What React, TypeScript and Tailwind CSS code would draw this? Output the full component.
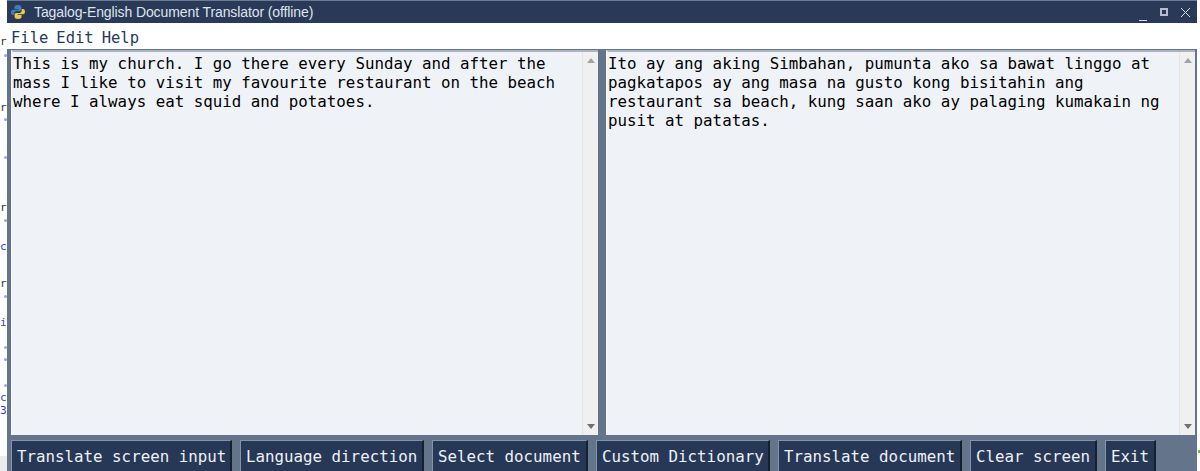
import React from "react";

const buttons = [
  { label: "Translate screen input", width: "w-[221px]" },
  { label: "Language direction", width: "w-[184px]" },
  { label: "Select document", width: "w-[156px]" },
  { label: "Custom Dictionary", width: "w-[174px]" },
  { label: "Translate document", width: "w-[184px]" },
  { label: "Clear screen", width: "w-[127px]" },
  { label: "Exit", width: "w-[51px]" },
];

const leftText =
  "This is my church. I go there every Sunday and after the\nmass I like to visit my favourite restaurant on the beach\nwhere I always eat squid and potatoes.";
const rightText =
  "Ito ay ang aking Simbahan, pumunta ako sa bawat linggo at\npagkatapos ay ang masa na gusto kong bisitahin ang\nrestaurant sa beach, kung saan ako ay palaging kumakain ng\npusit at patatas.";

// bits of the window behind, peeking out on the left
const behind = [
  { y: 36, ch: "r", cls: "text-[#333]" },
  { y: 102, ch: "r", cls: "text-[#333]" },
  { y: 202, ch: "r", cls: "text-[#333]" },
  { y: 278, ch: "r", cls: "text-[#333]" },
  { y: 241, ch: "c", cls: "text-[#3344dd]" },
  { y: 317, ch: "i", cls: "text-[#3344dd]" },
  { y: 392, ch: "c", cls: "text-[#3344dd]" },
  { y: 405, ch: "3", cls: "text-[#3344dd]" },
  { y: 457, ch: ":", cls: "text-[#333]" },
];
const dots = [54, 118, 156, 219, 295, 346, 358, 384];

const PythonIcon = () => (
  <svg width="16" height="16" viewBox="0 0 16 16">
    <path d="M8 1C5 1 4.500 2 4.500 3.200V5h3.800v.7H3C1.600 5.700 1 6.800 1 8.200s.7 2.800 2 2.800h1.300V9.300c0-1.200 1-2.300 2.300-2.300h3c1 0 1.800-.8 1.800-1.800V3C11.400 1.800 10 1 8 1z" fill="#3f7fb8" />
    <path d="M8 15c3 0 3.500-1 3.500-2.200V11H7.700v-.7H13c1.400 0 2-1.100 2-2.500s-.7-2.800-2-2.800h-1.300v1.700c0 1.200-1 2.300-2.300 2.300h-3c-1 0-1.800.8-1.800 1.800V13c0 1.200 1.400 2 3.400 2z" fill="#f2c843" />
  </svg>
);

const TextPane = ({ text, width }: { text: string; width: string }) => (
  <div className={`${width} flex bg-[#eff2f7] border-t-2 border-l-2 border-t-[#a9b4c4] border-l-[#f4f6fa]`}>
    <div className="flex-1 whitespace-pre pt-[2px] text-[15.8px] leading-[19px] text-black">{text}</div>
    <div className="w-[16px] flex flex-col justify-between items-center py-[6px] bg-[#f0f0f0] border-l border-[#e4e4e4]">
      <div className="w-0 h-0 border-x-[4px] border-x-transparent border-b-[5px] border-b-[#a3a3a3]" />
      <div className="w-0 h-0 border-x-[4px] border-x-transparent border-t-[5px] border-t-[#707070]" />
    </div>
  </div>
);

export default function App() {
  return (
    <div className="relative w-[1200px] h-[471px] overflow-hidden bg-white font-['DejaVu_Sans_Mono','Liberation_Mono',monospace]">
      {behind.map((b) => (
        <div key={b.y} className={`absolute left-0 text-[11px] leading-none ${b.cls}`} style={{ top: b.y }}>
          {b.ch}
        </div>
      ))}
      {dots.map((y) => (
        <div key={y} className="absolute left-[4px] w-[3px] h-[3px] rounded-full bg-[#a79cf0]" style={{ top: y }} />
      ))}
      <div className="absolute left-0 top-[456px] w-[7px] h-[15px] bg-[#ececec]" />
      <div className="absolute left-[1198px] top-[450px] w-[2px] h-[3px] bg-[#6fbf2a]" />

      <div className="relative ml-[7px] w-[1190px] h-[471px] flex flex-col">
        <div className="h-[23px] flex items-center bg-[#293a58] border-t border-[#6b7a90] pl-[3px] pr-[7px] text-[#dfe4ec] font-['Liberation_Sans',sans-serif] text-[14px]">
          <PythonIcon />
          <span className="ml-[8px] tracking-[-0.1px]">Tagalog-English Document Translator (offline)</span>
          <div className="ml-auto flex items-center text-[#d5dbe5]">
            <div className="w-[8px] h-[1px] bg-[#d5dbe5] translate-y-[8px]" />
            <div className="ml-[13px] w-[8px] h-[8px] border-2 border-[#b4bdcc]" />
            <svg className="ml-[13px]" width="9" height="9" viewBox="0 0 9 9" stroke="currentColor" strokeWidth="1">
              <path d="M0 0L9 9M9 0L0 9" />
            </svg>
          </div>
        </div>
        <div className="h-[26px] bg-white flex items-center pt-[5px] pl-[4px] gap-[8px] text-[15.5px] text-[#263a5c]">
          <span>File</span>
          <span>Edit</span>
          <span>Help</span>
        </div>
        <div className="flex-1 flex flex-col bg-[#64748b] pl-[4px] pr-[2px]">
          <div className="flex-1 flex gap-[8px] pt-[1px]">
            <TextPane text={leftText} width="w-[587px]" />
            <TextPane text={rightText} width="flex-1" />
          </div>
          <div className="h-[36px] flex gap-[8px] pt-[5px]">
            {buttons.map((b) => (
              <button
                key={b.label}
                className={`${b.width} h-[31px] shrink-0 bg-[#273857] border-t border-l border-[#8594a8] border-r-2 border-r-[#15202f] text-left pl-[5px] pt-[2px] text-[15.8px] text-[#eef1f6]`}
              >
                {b.label}
              </button>
            ))}
          </div>
        </div>
      </div>
    </div>
  );
}
